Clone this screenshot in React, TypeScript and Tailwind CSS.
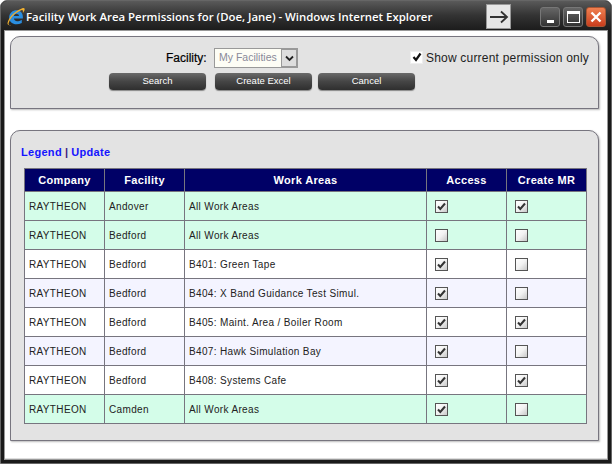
const rows = [
  { facility: "Andover", area: "All Work Areas", access: true, mr: true, bg: "bg-[#d4fde9]" },
  { facility: "Bedford", area: "All Work Areas", access: false, mr: false, bg: "bg-[#d4fde9]" },
  { facility: "Bedford", area: "B401: Green Tape", access: true, mr: false, bg: "bg-white" },
  { facility: "Bedford", area: "B404: X Band Guidance Test Simul.", access: true, mr: false, bg: "bg-[#f4f4ff]" },
  { facility: "Bedford", area: "B405: Maint. Area / Boiler Room", access: true, mr: true, bg: "bg-white" },
  { facility: "Bedford", area: "B407: Hawk Simulation Bay", access: true, mr: false, bg: "bg-[#f4f4ff]" },
  { facility: "Bedford", area: "B408: Systems Cafe", access: true, mr: true, bg: "bg-white" },
  { facility: "Camden", area: "All Work Areas", access: true, mr: false, bg: "bg-[#d4fde9]" },
];

function Check({ on }: { on: boolean }) {
  return (
    <span className="flex h-[13px] w-[13px] items-center justify-center border border-[#555] bg-gradient-to-br from-white via-[#f2f2f2] to-[#c8c8c8]">
      {on && (
        <svg width="9" height="9" viewBox="0 0 9 9">
          <path d="M1 4.5 L3.3 7 L8 1.5" fill="none" stroke="#333" strokeWidth="2" />
        </svg>
      )}
    </span>
  );
}

function DarkButton({ label }: { label: string }) {
  return (
    <button className="flex h-[17px] w-[97px] items-center justify-center rounded-[4px] bg-gradient-to-b from-[#6a6a6a] via-[#454545] to-[#2f2f2f] text-[9.5px] text-white shadow-[0_1px_1px_#888]">
      {label}
    </button>
  );
}

function IeLogo() {
  return (
    <svg width="20" height="20" viewBox="0 0 19 19" className="mt-[2px] shrink-0">
      <path d="M3 10 C3 5.5 6.5 3 10 3 C14.5 3 16.5 6.5 16 11 L7.5 11 C7.7 13.5 11 14.5 15 12 L15 15.2 C9.5 18 3 16 3 10 Z M7.5 8.5 L12.4 8.5 C12 5.6 8 5.6 7.5 8.5 Z" fill="#2a8ee0" fillRule="evenodd" />
      <path d="M1.5 15 C3 9 9 3.5 16 1 C17.5 0.6 18 1.5 17.6 3 L16 6 C16.4 3.4 16 2.4 14.5 3 C9 5 4 10 2.5 15.5 C2.2 16.8 3 17.5 5 17 C3 18 1 17 1.5 15 Z" fill="#f0b030" />
    </svg>
  );
}

export default function App() {
  return (
    <div className="flex h-[464px] w-[612px] flex-col overflow-hidden rounded-t-[7px] border border-[#666] bg-[#1a1a1a] font-['Liberation_Sans',sans-serif] text-[#111]">
      {/* barra de titulo */}
      <div className="flex h-[29px] shrink-0 items-center bg-gradient-to-b from-[#5a5a5a] via-[#333] to-[#1c1c1c] pl-[5px] pr-[5px]">
        <IeLogo />
        <span className="mt-[2px] font-['Open_Sans',sans-serif] text-[11.4px] font-semibold whitespace-nowrap text-white">
          Facility Work Area Permissions for (Doe, Jane) - Windows Internet Explorer
        </span>
        <span className="ml-auto mt-[2px] flex h-[25px] w-[25px] items-center justify-center border border-[#999] bg-[#e6e6e6]">
          <svg width="20" height="14" viewBox="0 0 20 14">
            <path d="M1 7 H18 M12 1.5 L18 7 L12 12.5" fill="none" stroke="#333" strokeWidth="1.8" />
          </svg>
        </span>
        <span className="mt-[2px] ml-[29px] flex gap-[3px]">
          <span className="flex h-[20px] w-[20px] items-end justify-center rounded-[3px] border border-[#777] bg-gradient-to-b from-[#666] to-[#333] pb-[3px]">
            <span className="h-[3px] w-[7px] bg-white" />
          </span>
          <span className="flex h-[20px] w-[20px] items-center justify-center rounded-[3px] border border-[#777] bg-gradient-to-b from-[#666] to-[#333]">
            <span className="h-[12px] w-[13px] border border-t-[3px] border-white" />
          </span>
          <span className="flex h-[20px] w-[20px] items-center justify-center rounded-[3px] border border-[#a53] bg-gradient-to-b from-[#f08050] to-[#c93c1c]">
            <svg width="12" height="12" viewBox="0 0 12 12">
              <path d="M1.5 1.5 L10.5 10.5 M10.5 1.5 L1.5 10.5" stroke="white" strokeWidth="2.4" />
            </svg>
          </span>
        </span>
      </div>

      {/* contenido */}
      <div className="mx-[3px] mb-[3px] flex-1 border border-[#999] bg-white">
        <div className="flex h-full flex-col border-b border-[#ddd] pl-[5px] pt-[5px]">
          <section className="h-[73px] w-[589px] rounded-t-[10px] border border-[#77757f] bg-[#e3e3e3] shadow-[1px_1px_2px_#bbb]">
            <div className="mt-[11px] flex h-[20px] items-center">
              <span className="ml-[155px] w-[42px] shrink-0 text-[12px] text-black [-webkit-text-stroke:0.2px_black]">Facility:</span>
              <span className="ml-[6px] flex h-[20px] w-[84px] items-center justify-between border border-[#999] bg-[#fdfdf5] pl-[4px] text-[10.5px] text-[#8a8a99]">
                My Facilities
                <span className="flex h-[18px] w-[16px] items-center justify-center border border-[#999] bg-[#ddd]">
                  <svg width="9" height="7" viewBox="0 0 9 7">
                    <path d="M1 1.5 L4.5 5 L8 1.5" fill="none" stroke="#222" strokeWidth="1.8" />
                  </svg>
                </span>
              </span>
              <span className="ml-[112px] flex items-center gap-[3px] text-[12px] tracking-[0.2px] whitespace-nowrap text-[#222]">
                <span className="mb-[2px] flex h-[13px] w-[13px] items-center justify-center border border-[#eee] bg-white">
                  <svg width="10" height="10" viewBox="0 0 10 10">
                    <path d="M1.5 5 L4 8 L8.5 1.5" fill="none" stroke="#111" strokeWidth="2.2" />
                  </svg>
                </span>
                Show current permission only
              </span>
            </div>
            <div className="mt-[5px] ml-[98px] flex">
              <DarkButton label="Search" />
              <span className="ml-[9px]"><DarkButton label="Create Excel" /></span>
              <span className="ml-[6px]"><DarkButton label="Cancel" /></span>
            </div>
          </section>

          <section className="mt-[21px] h-[311px] w-[589px] rounded-t-[10px] border border-[#77757f] bg-[#e3e3e3] pl-[10px] pt-[13px] shadow-[1px_1px_2px_#bbb]">
            <div className="flex h-[24px] items-start gap-[3px] text-[11px] font-bold tracking-[0.3px] text-[#1414ff]">
              <a href="#">Legend</a><span className="text-[#402080]">|</span><a href="#">Update</a>
            </div>
            <table className="ml-[3px] w-[562px] table-fixed border-collapse border border-[#77757f] text-[10px] tracking-[0.35px] text-[#222]">
              <colgroup>
                <col className="w-[80px]" />
                <col className="w-[80px]" />
                <col className="w-[242px]" />
                <col className="w-[80px]" />
                <col className="w-[80px]" />
              </colgroup>
              <thead>
                <tr className="h-[23px] bg-[#000066] text-[11px] font-bold text-white">
                  {["Company", "Facility", "Work Areas", "Access", "Create MR"].map((h) => (
                    <th key={h} className="border border-[#77757f] text-center">{h}</th>
                  ))}
                </tr>
              </thead>
              <tbody>
                {rows.map((r, i) => (
                  <tr key={i} className={`h-[29px] ${r.bg}`}>
                    <td className="border border-[#77757f] pl-[4px]">RAYTHEON</td>
                    <td className="border border-[#77757f] pl-[4px]">{r.facility}</td>
                    <td className="border border-[#77757f] pl-[4px]">{r.area}</td>
                    <td className="border border-[#77757f] pl-[8px]"><Check on={r.access} /></td>
                    <td className="border border-[#77757f] pl-[8px]"><Check on={r.mr} /></td>
                  </tr>
                ))}
              </tbody>
            </table>
          </section>
        </div>
      </div>
    </div>
  );
}
